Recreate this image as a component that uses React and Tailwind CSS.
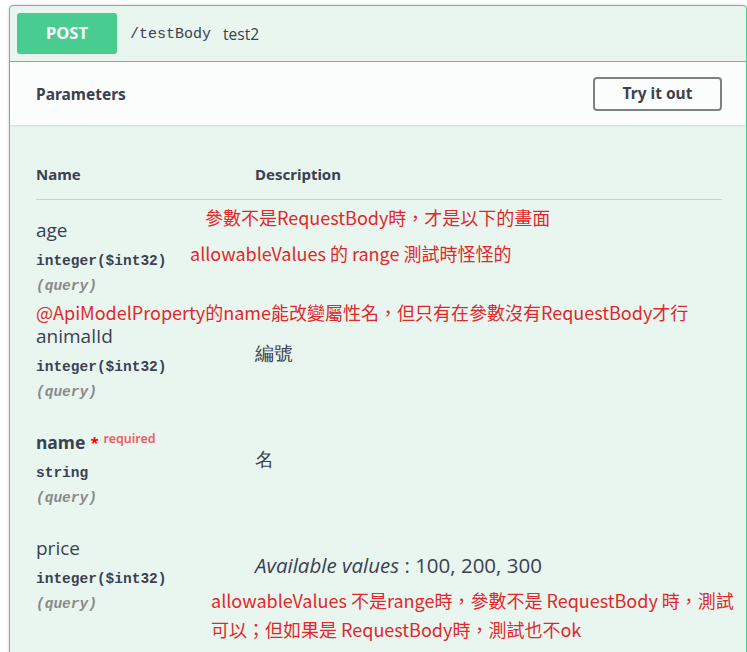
import React from "react";

const sans = "font-['Open_Sans','Noto_Sans',sans-serif]";
const head = "font-['Noto_Sans','Open_Sans',sans-serif]";
const mono = "font-['Liberation_Mono','DejaVu_Sans_Mono',monospace]";
const note = "font-['Noto_Sans_CJK_TC','Noto_Sans',sans-serif] text-[#e0282c]";

function ParamRow({ name, required, type, children }) {
  return (
    <div className="flex pt-[15px] pb-[9px]">
      <div className="w-[219px] shrink-0">
        <div className="h-[30px] flex items-center">
          {required ? (
            <span className={`${head} text-[17.5px] font-bold text-[#3b4151]`}>
              {name}
              <span className="relative -top-[1px] ml-[5px] text-[#ff0000] text-[15px]">*</span>
              <span className="relative -top-[6px] ml-[5px] text-[12.5px] font-semibold text-[#f25c5c]">required</span>
            </span>
          ) : (
            <span className={`${sans} text-[19px] text-[#3b4151]`}>{name}</span>
          )}
        </div>
        <div className={`h-[28px] pt-[6px] flex items-center ${mono} text-[14.5px] font-bold text-[#3b4151]`}>{type}</div>
        <div className={`h-[24px] pt-[4px] flex items-center ${mono} text-[14.5px] italic font-bold text-[#8a8a8a]`}>(query)</div>
      </div>
      <div className="flex-1 pt-[20px]">
        <div className={`${sans} text-[19px] leading-[24px] text-[#3b4151]`}>{children}</div>
      </div>
    </div>
  );
}

export default function App() {
  return (
    <div className="relative h-[652px] bg-white overflow-hidden">
      <div className="ml-[9px] mt-[5px] w-[738px] border border-[#49cc90] rounded-[4px] bg-[#e8f6ef] shadow-[0_0_3px_rgba(0,0,0,0.19)]">
        <div className="flex items-center p-[7px] border-b border-[#49cc90]">
          <div className={`w-[100px] h-[41px] rounded-[3px] bg-[#49cc90] flex items-center justify-center ${head} text-[16.5px] font-bold text-white`}>
            POST
          </div>
          <span className={`ml-[13px] mt-[4px] ${mono} text-[15px] text-[#3b4151]`}>/testBody</span>
          <span className={`ml-[12px] mt-[3px] ${sans} text-[15.5px] text-[#3b4151]`}>test2</span>
        </div>
        <div className="flex items-center justify-between pl-[26px] pr-[24px] h-[63px] bg-[#fbfdfc] shadow-[0_1px_2px_rgba(0,0,0,0.1)]">
          <span className={`${head} mt-[2px] text-[15.5px] font-bold text-[#3b4151]`}>Parameters</span>
          <button className={`w-[129px] h-[34px] border-2 border-[#808080] rounded-[4px] ${head} text-[15.5px] font-bold text-[#3b4151]`}>
            Try it out
          </button>
        </div>
        <div className="pl-[26px] pr-[24px] pb-[60px]">
          <div className="flex pt-[37px] pb-[13px] border-b border-[#c8d2cd]">
            <div className={`w-[219px] h-[24px] flex items-center ${head} text-[15px] font-bold text-[#3b4151]`}>Name</div>
            <div className={`h-[24px] flex items-center ${head} text-[15px] font-bold text-[#3b4151]`}>Description</div>
          </div>
          <ParamRow name="age" type="integer($int32)" />
          <ParamRow name="animalId" type="integer($int32)">編號</ParamRow>
          <ParamRow name="name" required type="string">名</ParamRow>
          <ParamRow name="price" type="integer($int32)">
            <span className="text-[20.5px]">
              <i>Available values</i> : 100, 200, 300
            </span>
          </ParamRow>
        </div>
      </div>

      <div className={`absolute left-[205px] top-[205px] leading-[24px] text-[18px] ${note}`}>
        參數不是RequestBody時，才是以下的畫面
      </div>
      <div className={`absolute left-[190px] top-[241px] leading-[24px] text-[18px] ${note}`}>
        allowableValues 的 range 測試時怪怪的
      </div>
      <div className={`absolute left-[36px] top-[300px] leading-[24px] text-[18px] ${note}`}>
        @ApiModelProperty的name能改變屬性名，但只有在參數沒有RequestBody才行
      </div>
      <div className={`absolute left-[211px] top-[586px] leading-[29px] text-[18px] whitespace-nowrap ${note}`}>
        allowableValues 不是range時，參數不是 RequestBody 時，測試
        <br />
        可以；但如果是 RequestBody時，測試也不ok
      </div>
    </div>
  );
}
